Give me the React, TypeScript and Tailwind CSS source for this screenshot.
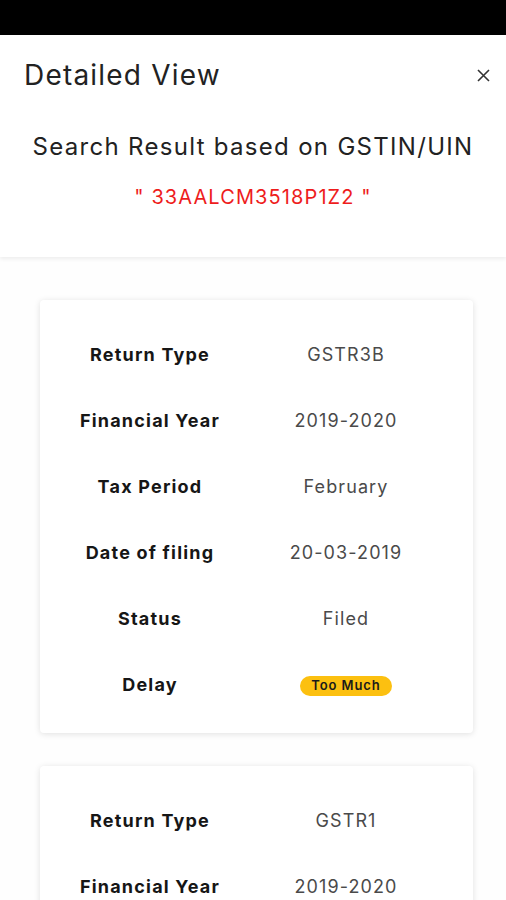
import React from "react";

const font = { fontFamily: "Inter, 'Noto Sans', sans-serif" };

type Row = { label: string; value: string; badge?: boolean };

const card1: Row[] = [
  { label: "Return Type", value: "GSTR3B" },
  { label: "Financial Year", value: "2019-2020" },
  { label: "Tax Period", value: "February" },
  { label: "Date of filing", value: "20-03-2019" },
  { label: "Status", value: "Filed" },
  { label: "Delay", value: "Too Much", badge: true },
];

const card2: Row[] = [
  { label: "Return Type", value: "GSTR1" },
  { label: "Financial Year", value: "2019-2020" },
  { label: "Tax Period", value: "February" },
];

function Card({ rows }: { rows: Row[] }) {
  return (
    <div className="mx-[40px] w-[433px] rounded-[4px] bg-white shadow-[0_1px_6px_rgba(0,0,0,0.12)] pt-[21px] pb-[16px]">
      {rows.map((r) => (
        <div key={r.label} className="grid grid-cols-[220px_172px] h-[66px] items-center">
          <div className="text-center text-[18px] font-bold tracking-[1.2px] text-[#161616]">{r.label}</div>
          <div className="flex justify-center">
            {r.badge ? (
              <span className="mt-[3px] rounded-full bg-[#fcc010] px-[11px] h-[20px] flex items-center text-[13px] font-semibold tracking-[0.9px] text-[#1a1a1a]">
                {r.value}
              </span>
            ) : (
              <span className="text-[18px] tracking-[1.1px] text-[#4a4a4a]">{r.value}</span>
            )}
          </div>
        </div>
      ))}
    </div>
  );
}

export default function App() {
  return (
    <div style={font} className="w-[506px] h-[900px] overflow-hidden bg-white">
      <div className="h-[35px] bg-black" />
      <div className="bg-white shadow-[0_2px_4px_rgba(0,0,0,0.07)] relative z-10 h-[222px]">
        <div className="flex items-center justify-between pl-[24px] pr-[16px] pt-[24px]">
          <span className="text-[28px] tracking-[1.2px] text-[#222] leading-[32px]">Detailed View</span>
          <svg width="13" height="13" viewBox="0 0 13 13" className="text-[#333]">
            <path d="M1 1L12 12M12 1L1 12" stroke="currentColor" strokeWidth="1.6" />
          </svg>
        </div>
        <div className="text-center text-[24px] tracking-[1.3px] text-[#222] mt-[41px] leading-[30px]">
          Search Result based on GSTIN/UIN
        </div>
        <div className="text-center text-[20px] tracking-[1.1px] text-[#ee1c1c] mt-[23px] leading-[24px]">
          " 33AALCM3518P1Z2 "
        </div>
      </div>
      <div className="pt-[43px] flex flex-col gap-[33px] bg-[#fefefe]">
        <Card rows={card1} />
        <Card rows={card2} />
      </div>
    </div>
  );
}
